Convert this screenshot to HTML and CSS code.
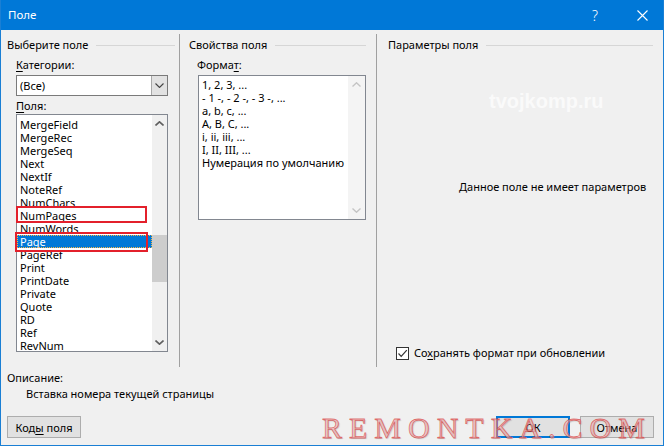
FILE: index.html
```html
<!DOCTYPE html>
<html lang="ru">
<head>
<meta charset="utf-8">
<title>Поле</title>
<link rel="stylesheet" href="styles.css">
</head>
<body>
<div class="window">
  <div class="titlebar">
    <span class="title">Поле</span>
    <span class="tb-btn help">?</span>
    <span class="tb-btn close">
      <svg width="11" height="11" viewBox="0 0 11 11"><path d="M0.5 0.5 L10.5 10.5 M10.5 0.5 L0.5 10.5" stroke="#fff" stroke-width="1.1" fill="none"/></svg>
    </span>
  </div>
  <div class="content">
    <div class="panels">
      <section class="panel left">
        <div class="group-title"><span>Выберите поле</span><i class="rule"></i></div>
        <div class="body">
          <div class="label"><u>К</u>атегории:</div>
          <div class="combo">
            <span class="combo-text">(Все)</span>
            <span class="combo-btn">
              <svg width="9" height="5" viewBox="0 0 9 5"><path d="M0.5 0.5 L4.5 4.5 L8.5 0.5" stroke="#444" stroke-width="1.1" fill="none"/></svg>
            </span>
          </div>
          <div class="label"><u>П</u>оля:</div>
          <div class="listbox fields">
            <div class="items">
              <div class="item">MergeField</div>
              <div class="item">MergeRec</div>
              <div class="item">MergeSeq</div>
              <div class="item">Next</div>
              <div class="item">NextIf</div>
              <div class="item">NoteRef</div>
              <div class="item">NumChars</div>
              <div class="item">NumPages</div>
              <div class="item">NumWords</div>
              <div class="item selected">Page</div>
              <div class="item">PageRef</div>
              <div class="item">Print</div>
              <div class="item">PrintDate</div>
              <div class="item">Private</div>
              <div class="item">Quote</div>
              <div class="item">RD</div>
              <div class="item">Ref</div>
              <div class="item">RevNum</div>
            </div>
            <div class="scrollbar">
              <span class="arrow"><svg width="9" height="5" viewBox="0 0 9 5"><path d="M0.5 4.5 L4.5 0.8 L8.5 4.5" stroke="#606060" stroke-width="1.6" fill="none"/></svg></span>
              <span class="track"><span class="thumb"></span></span>
              <span class="arrow"><svg width="9" height="5" viewBox="0 0 9 5"><path d="M0.5 0.5 L4.5 4.2 L8.5 0.5" stroke="#606060" stroke-width="1.6" fill="none"/></svg></span>
            </div>
            <span class="mark mark-numpages"></span>
            <span class="mark mark-page"></span>
          </div>
        </div>
      </section>
      <div class="divider"></div>
      <section class="panel mid">
        <div class="group-title"><span>Свойства поля</span><i class="rule"></i></div>
        <div class="body">
          <div class="label">Форма<u>т</u>:</div>
          <div class="listbox format">
            <div class="items">
              <div class="item">1, 2, 3, ...</div>
              <div class="item">- 1 -, - 2 -, - 3 -, ...</div>
              <div class="item">a, b, c, ...</div>
              <div class="item">A, B, C, ...</div>
              <div class="item">i, ii, iii, ...</div>
              <div class="item">I, II, III, ...</div>
              <div class="item">Нумерация по умолчанию</div>
            </div>
            <div class="scrollbar disabled">
              <span class="arrow"><svg width="9" height="5" viewBox="0 0 9 5"><path d="M0.5 4.5 L4.5 0.8 L8.5 4.5" stroke="#c4c4c4" stroke-width="1.4" fill="none"/></svg></span>
              <span class="track"></span>
              <span class="arrow"><svg width="9" height="5" viewBox="0 0 9 5"><path d="M0.5 0.5 L4.5 4.2 L8.5 0.5" stroke="#c4c4c4" stroke-width="1.4" fill="none"/></svg></span>
            </div>
          </div>
        </div>
      </section>
      <div class="divider"></div>
      <section class="panel right">
        <div class="group-title"><span>Параметры поля</span><i class="rule"></i></div>
        <div class="body">
          <div class="no-params">Данное поле не имеет параметров</div>
          <label class="check-row">
            <span class="checkbox"><svg width="11" height="11" viewBox="0 0 11 11"><path d="M1.5 5.5 L4.2 8.3 L9.8 2.2" stroke="#333" stroke-width="1.2" fill="none"/></svg></span>
            <span>Со<u>х</u>ранять формат при обновлении</span>
          </label>
        </div>
      </section>
    </div>
    <div class="description">
      <div class="desc-label">Описание:</div>
      <div class="desc-text">Вставка номера текущей страницы</div>
    </div>
    <div class="buttons">
      <span class="btn"><span>Код<u>ы</u> поля</span></span>
      <span class="spacer"></span>
      <span class="btn default"><span>ОК</span></span>
      <span class="btn"><span>Отмена</span></span>
    </div>
  </div>
  <div class="wm-tvoj">tvojkomp.ru</div>
  <div class="wm-remontka">REMONTKA.COM</div>
</div>
</body>
</html>
```

FILE: styles.css
```css
* { box-sizing: border-box; }
html, body { margin: 0; padding: 0; }
body {
  font-family: "Noto Sans", "Segoe UI", sans-serif;
  font-size: 11px;
  color: #000;
  background: #fff;
}
u { text-decoration: underline; text-underline-offset: 2px; }

.window {
  position: relative;
  width: 664px;
  height: 446px;
  border: 1px solid #1a7fd4;
  border-top: none;
  background: #f0f0f0;
  display: flex;
  flex-direction: column;
  overflow: hidden;
}

.titlebar {
  height: 30px;
  background: #0078d7;
  color: #fff;
  display: flex;
  align-items: center;
  margin: 0 -1px;
  font-size: 11.5px;
}
.title { padding-left: 8px; flex: 1; line-height: 16px; }
.tb-btn {
  width: 46px;
  height: 30px;
  display: flex;
  align-items: center;
  justify-content: center;
}
.help { font-size: 14px; font-weight: 300; }
.close { padding-left: 2px; }

.content { flex: 1; display: flex; flex-direction: column; }

.panels {
  height: 337px;
  display: grid;
  grid-template-columns: 178px 1px 196px 1px 286px;
}
.divider { background: #a0a0a0; margin-top: 4px; }

.panel { padding-top: 7px; display: flex; flex-direction: column; }
.left { padding-left: 6px; padding-right: 4px; }
.mid { padding-left: 9px; padding-right: 10px; }
.right { padding-left: 11px; padding-right: 10px; }

.group-title {
  display: flex;
  align-items: center;
  height: 16px;
  line-height: 16px;
}
.rule { flex: 1; height: 1px; background: #d6d6d6; margin-left: 8px; }

.body { flex: 1; display: flex; flex-direction: column; }
.left .body { padding-left: 9px; padding-right: 7px; }
.mid .body { padding-left: 8px; }

.label { line-height: 16px; margin-top: 4px; }
.label + .combo, .label + .format { margin-top: 2px; }
.combo + .label { margin-top: 2px; }

.combo {
  height: 21px;
  border: 1px solid #7a7a7a;
  background: #fff;
  display: flex;
}
.combo-text { flex: 1; line-height: 19px; padding-left: 3px; }
.combo-btn {
  width: 16px;
  background: #e2e2e2;
  border-left: 1px solid #a8a8a8;
  display: flex;
  align-items: center;
  justify-content: center;
}

.listbox {
  position: relative;
  border: 1px solid #828790;
  background: #fff;
  display: flex;
}
.listbox .items { flex: 1; overflow: hidden; }
.item { line-height: 13px; height: 13px; padding-left: 3px; white-space: nowrap; }

.fields { height: 238px; }
.fields .items { padding-top: 3px; }
.item.selected {
  background: #0078d7;
  color: #fff;
  outline: 1px dotted #f3b64a;
  outline-offset: -1px;
}

.format { height: 145px; margin-left: 1px; }
.format .items { padding-top: 2px; }

.scrollbar {
  width: 15px;
  background: #f0f0f0;
  display: flex;
  flex-direction: column;
}
.scrollbar .arrow {
  height: 17px;
  display: flex;
  align-items: center;
  justify-content: center;
}
.scrollbar .track { flex: 1; }
.thumb {
  display: block;
  margin-top: 103px;
  height: 47px;
  background: #cdcdcd;
}
.format .scrollbar { width: 17px; background: #f4f4f4; }

.mark {
  position: absolute;
  border: 2px solid #e3202b;
}
.mark-numpages { left: -1px; top: 91px; width: 131px; height: 17px; }
.mark-page { left: -2px; top: 117px; width: 133px; height: 20px; }

.no-params { margin-top: 126px; padding-left: 71px; line-height: 16px; white-space: nowrap; }
.check-row {
  margin-top: auto;
  margin-bottom: 6px;
  padding-left: 8px;
  display: flex;
  align-items: center;
  gap: 5px;
  line-height: 16px;
}
.checkbox {
  width: 13px;
  height: 13px;
  border: 1px solid #333;
  background: #fff;
  display: flex;
  align-items: center;
  justify-content: center;
}

.description { padding-left: 6px; margin-top: 3px; }
.desc-label { line-height: 16px; }
.desc-text { line-height: 16px; padding-left: 19px; }

.buttons {
  display: flex;
  margin-top: 14px;
  padding: 0 9px 0 6px;
  gap: 10px;
}
.spacer { flex: 1; }
.btn {
  width: 74px;
  height: 22px;
  border: 1px solid #adadad;
  background: #e1e1e1;
  display: flex;
  align-items: center;
  justify-content: center;
  white-space: nowrap;
}
.btn.default { border: 2px solid #0078d7; }

.wm-tvoj {
  position: absolute;
  left: 488px;
  top: 91px;
  font-family: "Liberation Sans", sans-serif;
  font-weight: bold;
  font-size: 20px;
  line-height: 20px;
  color: rgba(255, 255, 255, 0.7);
}
.wm-remontka {
  position: absolute;
  left: 321px;
  top: 413px;
  font-family: "Liberation Serif", serif;
  font-size: 30px;
  line-height: 30px;
  letter-spacing: 7px;
  color: rgba(245, 185, 185, 0.6);
  -webkit-text-stroke: 0.8px rgba(215, 60, 60, 0.7);
  text-shadow: 1px 1px 1px rgba(130, 130, 130, 0.4);
  pointer-events: none;
}
```
